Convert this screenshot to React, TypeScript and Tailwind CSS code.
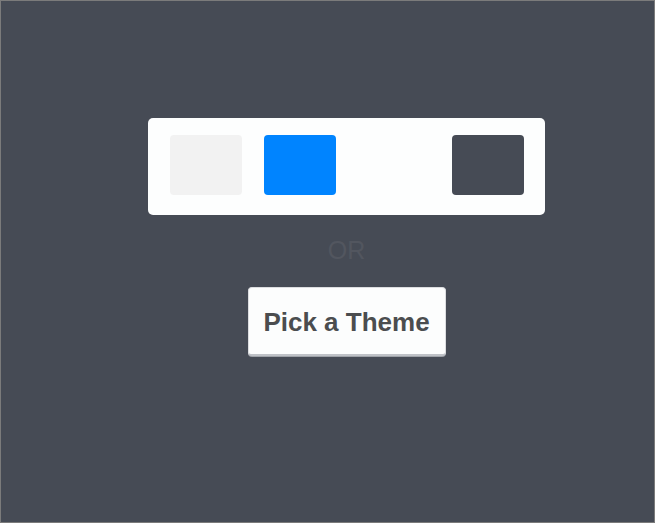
export default function App() {
  const swatches = ["bg-[#f2f2f2]", "bg-[#0084ff]", "bg-[#fdfefe]", "bg-[#464b55]"]

  return (
    <div className="w-[655px] h-[523px] border border-[#7b7b7b] bg-[#464b55] font-['Liberation_Sans',Arial,sans-serif]">
      <div className="pt-[117px] pl-[147px] w-[544px] flex flex-col items-center">
        {/* Theme swatches */}
        <div className="w-[397px] h-[97px] rounded-[5px] bg-[#fdfefe] flex gap-[22px] pl-[22px] pt-[17px]">
          {swatches.map((c, i) => (
            <button key={i} className={`w-[72px] h-[60px] rounded-[4px] ${c}`} />
          ))}
        </div>

        <p className="mt-[20px] text-[25px] leading-[30px] text-[#52565f]">OR</p>

        <button className="mt-[22px] w-[198px] h-[69px] rounded-[4px] bg-[#fcfdfd] border border-[#dcdde0] border-b-[2px] border-b-[#bfc2c7] shadow-[0_1px_0_#9ea2a8] pt-[1px] text-[26px] leading-[30px] font-bold text-[#4b4d4f]">
          Pick a Theme
        </button>
      </div>
    </div>
  )
}
